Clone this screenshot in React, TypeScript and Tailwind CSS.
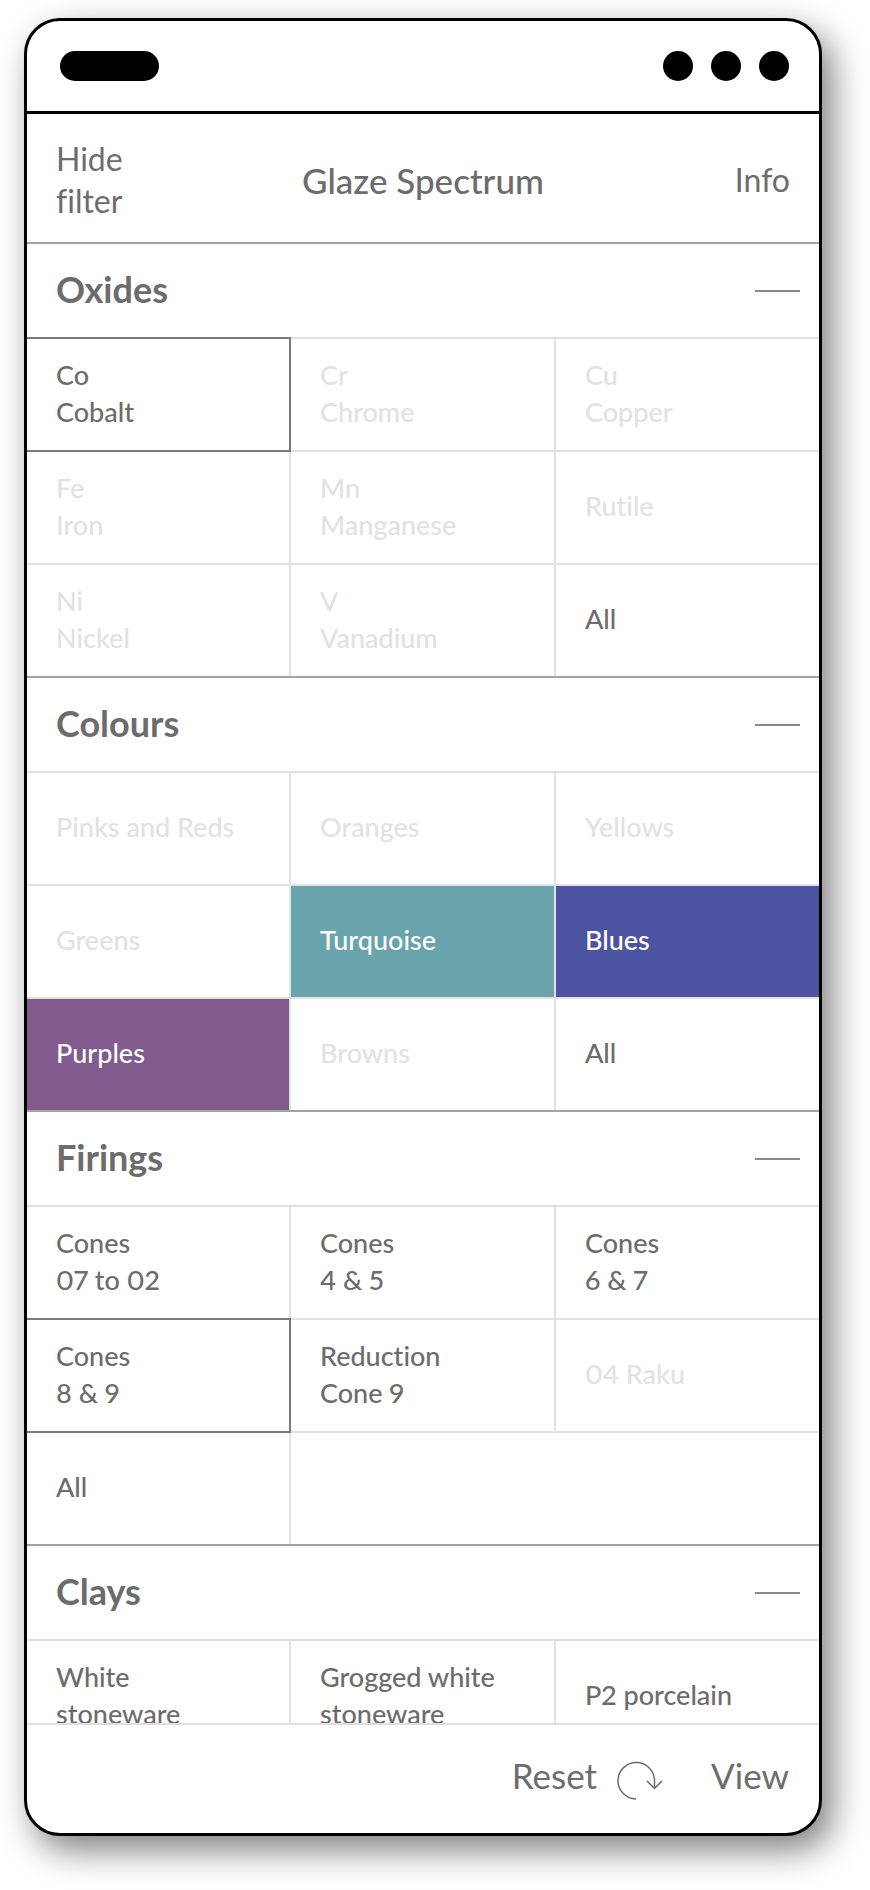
import React from "react";

type Tone = "on" | "off" | "selected" | "turquoise" | "blue" | "purple";
type Option = { lines: string[]; tone: Tone };
type Group = { title: string; options: Option[]; extraColumns?: boolean };

const opt = (tone: Tone, ...lines: string[]): Option => ({ lines, tone });

const groups: Group[] = [
  {
    title: "Oxides",
    options: [
      opt("selected", "Co", "Cobalt"),
      opt("off", "Cr", "Chrome"),
      opt("off", "Cu", "Copper"),
      opt("off", "Fe", "Iron"),
      opt("off", "Mn", "Manganese"),
      opt("off", "Rutile"),
      opt("off", "Ni", "Nickel"),
      opt("off", "V", "Vanadium"),
      opt("on", "All"),
    ],
  },
  {
    title: "Colours",
    options: [
      opt("off", "Pinks and Reds"),
      opt("off", "Oranges"),
      opt("off", "Yellows"),
      opt("off", "Greens"),
      opt("turquoise", "Turquoise"),
      opt("blue", "Blues"),
      opt("purple", "Purples"),
      opt("off", "Browns"),
      opt("on", "All"),
    ],
  },
  {
    title: "Firings",
    options: [
      opt("on", "Cones", "07 to 02"),
      opt("on", "Cones", "4 & 5"),
      opt("on", "Cones", "6 & 7"),
      opt("selected", "Cones", "8 & 9"),
      opt("on", "Reduction", "Cone 9"),
      opt("off", "04 Raku"),
      opt("on", "All"),
    ],
    extraColumns: true,
  },
  {
    title: "Clays",
    options: [
      opt("on", "White", "stoneware"),
      opt("on", "Grogged white", "stoneware"),
      opt("on", "P2 porcelain"),
    ],
  },
];

const tones: Record<Tone, string> = {
  on: "bg-white text-[#6d6c6d]",
  off: "bg-white text-[#e2e2e2]",
  selected: "bg-white text-[#6d6c6d] outline-2 outline-[#7b797b]",
  turquoise: "bg-[#69a3ab] text-white",
  blue: "bg-[#4c54a1] text-white",
  purple: "bg-[#815b8d] text-white",
};

function FilterGroup({ group }: { group: Group }) {
  return (
    <section className="border-t-2 border-[#a3a3a3]">
      <div className="flex h-[93px] items-center justify-between pr-[19px] pl-[29px]">
        <h2 className="pb-1 text-[36px] font-bold">{group.title}</h2>
        <button type="button" aria-label={`Collapse ${group.title}`} className="flex h-11 w-[45px] items-center">
          <span className="h-[2px] w-full bg-[#8a8a8a]" />
        </button>
      </div>
      <div className="grid auto-rows-[111px] grid-cols-[262fr_263fr_263fr] gap-[2px] border-t-2 border-[#dfdfdf] bg-[#e2e2e2]">
        {group.options.map((o) => (
          <button
            key={o.lines.join(" ")}
            type="button"
            className={`flex flex-col items-start justify-center pb-1 pl-[29px] text-left text-[27px] leading-[37px] font-medium ${tones[o.tone]}`}
          >
            {o.lines.map((line) => (
              <span key={line}>{line}</span>
            ))}
          </button>
        ))}
        {group.extraColumns && <div className="col-span-2 bg-white" />}
      </div>
    </section>
  );
}

function ResetIcon() {
  return (
    <svg viewBox="0 0 46 40" className="mt-3 h-10 w-[46px]" fill="none" stroke="currentColor" strokeWidth="1.5" aria-hidden="true">
      <path d="M19 38 A18.25 18.25 0 1 1 37.5 19.5 V27" />
      <path d="M30 20 L37.5 27.5 L45 20" />
    </svg>
  );
}

export default function App() {
  return (
    <div className="h-screen bg-white pt-[18px] pr-12 pb-[54px] pl-6 font-['Lato',sans-serif] text-[#6d6c6d] proportional-nums [font-variant-ligatures:none]">
      <div className="flex h-full flex-col overflow-hidden rounded-[36px] border-3 border-black bg-white shadow-[10px_14px_34px_rgba(0,0,0,0.5)]">
        <div className="flex h-[93px] shrink-0 items-center justify-between border-b-3 border-black pr-[30px] pl-[33px]">
          <span className="h-[30px] w-[99px] rounded-full bg-black" />
          <div className="flex gap-[18px]">
            <span className="size-[30px] rounded-full bg-black" />
            <span className="size-[30px] rounded-full bg-black" />
            <span className="size-[30px] rounded-full bg-black" />
          </div>
        </div>
        <header className="grid h-32 shrink-0 grid-cols-[1fr_auto_1fr] items-center px-[29px] pt-1 text-[32px] leading-[42px]">
          <button type="button" className="w-24 text-left">
            Hide filter
          </button>
          <h1 className="text-[35px] font-medium">Glaze Spectrum</h1>
          <a href="#info" className="justify-self-end">
            Info
          </a>
        </header>
        <main className="min-h-0 flex-1 overflow-hidden">
          {groups.map((g) => (
            <FilterGroup key={g.title} group={g} />
          ))}
        </main>
        <footer className="flex h-[110px] shrink-0 items-center justify-end border-t-2 border-[#dfdfdf] pr-[30px] pb-2 text-[35px]">
          <button type="button" className="flex items-center gap-5">
            Reset
            <ResetIcon />
          </button>
          <button type="button" className="ml-12">
            View
          </button>
        </footer>
      </div>
    </div>
  );
}
